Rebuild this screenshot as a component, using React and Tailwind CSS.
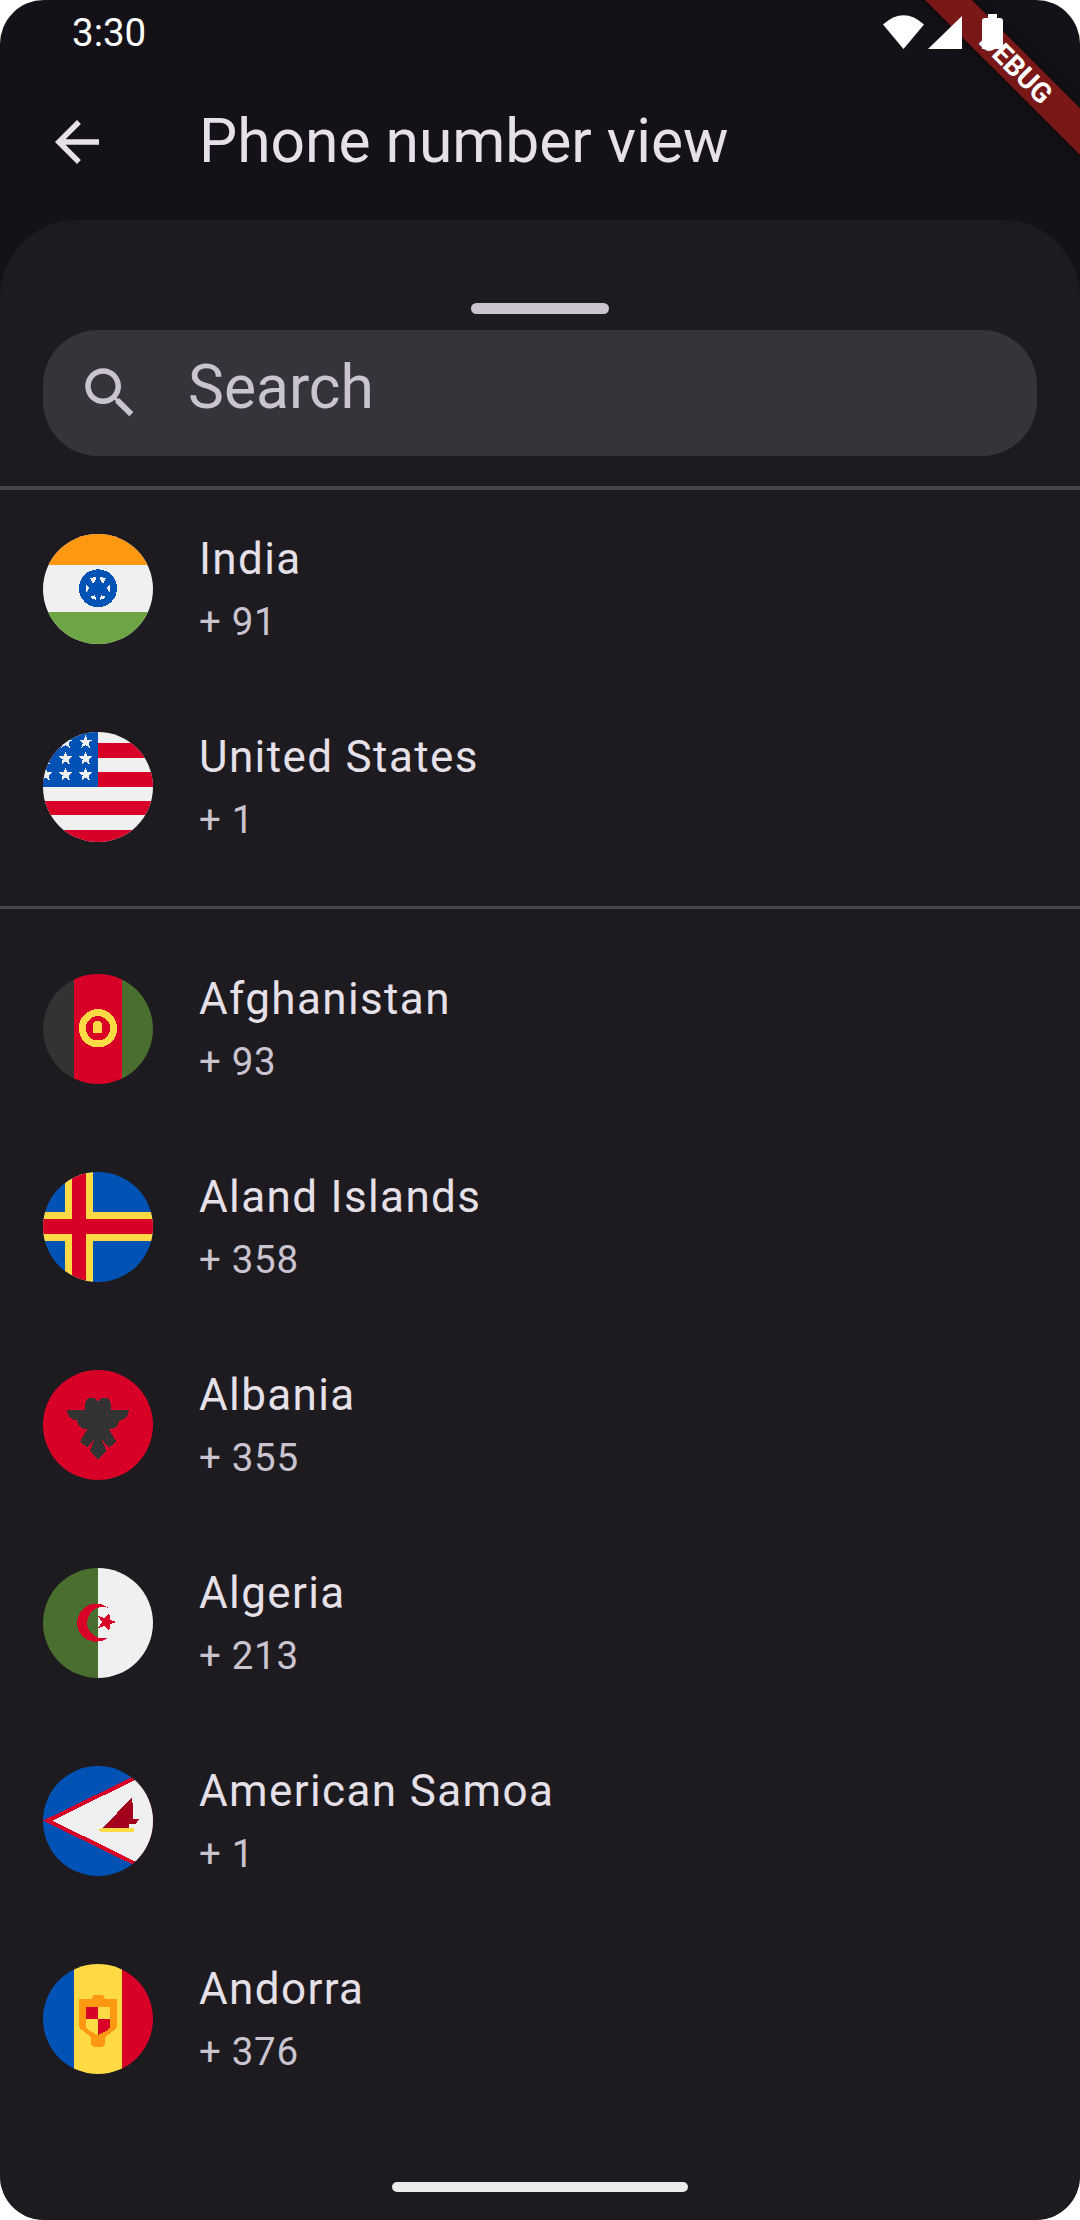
import React from 'react';

const BLUE = '#0052b4';
const RED = '#d80027';
const YELLOW = '#ffda44';
const WHITE = '#f0f0f0';
const GREEN = '#496e2d';
const DARK = '#333333';
const ORANGE = '#ff9811';

// five pointed star, rot in degrees
const starPoints = (cx, cy, r, rot = -90, inner = 0.42) => {
  const pts = [];
  for (let i = 0; i < 10; i++) {
    const a = ((rot + i * 36) * Math.PI) / 180;
    const rad = i % 2 === 0 ? r : r * inner;
    pts.push(`${(cx + rad * Math.cos(a)).toFixed(1)},${(cy + rad * Math.sin(a)).toFixed(1)}`);
  }
  return pts.join(' ');
};

function Flag({ box, children }) {
  return (
    <svg viewBox={box} shapeRendering="crispEdges" className="w-[110px] h-[110px] shrink-0 rounded-full">
      {children}
    </svg>
  );
}

const India = () => (
  <Flag box="-165 -163 330 330">
    <rect x="-165" y="-163" width="330" height="330" fill={WHITE} />
    <rect x="-165" y="-163" width="330" height="93" fill={ORANGE} />
    <rect x="-165" y="70" width="330" height="97" fill="#6da544" />
    <circle r="57" fill={BLUE} />
    <g fill={WHITE}>
      <polygon points="-24,-30 -6,-35 -8,-20 -16,-14" />
      <polygon points="24,-30 6,-35 8,-20 16,-14" />
      <polygon points="-36,-12 -26,0 -36,12" />
      <polygon points="36,-12 26,0 36,12" />
      <polygon points="-24,26 -9,20 -6,34 -18,32" />
      <polygon points="24,26 9,20 6,34 18,32" />
    </g>
  </Flag>
);

const Usa = () => {
  const stars = [[200, 30], [140, 30], [140, 80], [200, 80], [80, 80], [80, 128], [140, 128], [200, 128]];
  return (
    <Flag box="72 665 330 330">
      <rect x="72" y="665" width="330" height="330" fill={WHITE} />
      <rect x="72" y="698" width="330" height="45" fill={RED} />
      <rect x="72" y="786" width="330" height="44" fill={RED} />
      <rect x="72" y="872" width="330" height="43" fill={RED} />
      <rect x="72" y="960" width="330" height="35" fill={RED} />
      <rect x="72" y="665" width="165" height="165" fill={BLUE} />
      {stars.map(([x, y]) => (
        <polygon key={`${x}-${y}`} points={starPoints(x, 665 + y, 22)} fill={WHITE} />
      ))}
    </Flag>
  );
};

const Afghanistan = () => (
  <Flag box="42 42 330 330">
    <rect x="42" y="42" width="93" height="330" fill={DARK} />
    <rect x="135" y="42" width="144" height="330" fill={RED} />
    <rect x="279" y="42" width="93" height="330" fill={GREEN} />
    <circle cx="207" cy="205" r="47" fill="none" stroke={YELLOW} strokeWidth="21" />
    <path d="M192 219V198Q192 183 206 183Q220 183 220 198V219Z" fill={YELLOW} />
  </Flag>
);

const Aland = () => (
  <Flag box="42 35 330 330">
    <rect x="42" y="35" width="330" height="330" fill={BLUE} />
    <rect x="108" y="35" width="84" height="330" fill={YELLOW} />
    <rect x="42" y="156" width="330" height="87" fill={YELLOW} />
    <rect x="130" y="35" width="41" height="330" fill={RED} />
    <rect x="42" y="177" width="330" height="45" fill={RED} />
  </Flag>
);

const Albania = () => (
  <Flag box="42 30 330 330">
    <rect x="42" y="30" width="330" height="330" fill={RED} />
    <path
      d="M113 150H168Q166 113 187 113Q200 113 207 124Q214 113 227 113Q248 113 246 150H300Q298 178 270 182Q270 205 240 208L262 245L240 263L218 238L232 272L207 300L183 272L196 238L175 263L153 245L175 208Q145 205 145 182Q116 178 113 150Z"
      fill={DARK}
    />
  </Flag>
);

const Algeria = () => (
  <Flag box="42 53 330 330">
    <rect x="42" y="53" width="165" height="330" fill={GREEN} />
    <rect x="207" y="53" width="165" height="330" fill={WHITE} />
    <path d="M238 173A57 57 0 1 0 238 261A47 47 0 1 1 238 173Z" fill={RED} />
    <polygon points={starPoints(232, 215, 30, 0, 0.42)} fill={RED} />
  </Flag>
);

const Samoa = () => (
  <Flag box="42 47 330 330">
    <rect x="42" y="47" width="330" height="330" fill={BLUE} />
    <polygon points="42,211 310,80 372,80 372,342 310,342" fill={RED} />
    <polygon points="70,211 316,90 372,90 372,332 316,332" fill={WHITE} />
    <polygon points="222,232 310,140 312,205 330,205 322,220 300,220 300,234 285,234 285,232" fill="#a2001d" />
    <rect x="215" y="234" width="100" height="12" fill={YELLOW} />
    <rect x="210" y="237" width="6" height="6" fill={YELLOW} />
  </Flag>
);

const Andorra = () => (
  <Flag box="42 42 330 330">
    <rect x="42" y="42" width="93" height="330" fill={BLUE} />
    <rect x="135" y="42" width="144" height="330" fill={YELLOW} />
    <rect x="279" y="42" width="93" height="330" fill={RED} />
    <path
      d="M150 147H188Q190 135 198 135H217Q225 135 227 147H264V225Q264 235 255 241L228 262V280Q228 290 218 290H197Q187 290 187 280V262L160 241Q150 235 150 225Z"
      fill={ORANGE}
    />
    <path d="M171 171H243V226Q243 236 234 241L207 255L180 241Q171 236 171 226Z" fill={YELLOW} />
    <rect x="171" y="171" width="36" height="36" fill={RED} />
    <path d="M207 207H243V226Q243 236 234 241L207 255Z" fill={RED} />
  </Flag>
);

const PINNED = [
  { name: 'India', code: '+ 91', flag: <India /> },
  { name: 'United States', code: '+ 1', flag: <Usa /> },
];

const COUNTRIES = [
  { name: 'Afghanistan', code: '+ 93', flag: <Afghanistan /> },
  { name: 'Aland Islands', code: '+ 358', flag: <Aland /> },
  { name: 'Albania', code: '+ 355', flag: <Albania /> },
  { name: 'Algeria', code: '+ 213', flag: <Algeria /> },
  { name: 'American Samoa', code: '+ 1', flag: <Samoa /> },
  { name: 'Andorra', code: '+ 376', flag: <Andorra /> },
];

function CountryRow({ country }) {
  return (
    <div className="h-[198px] flex items-center pl-[43px]">
      {country.flag}
      <div className="ml-[46px] mb-[2px] flex flex-col gap-[7px]">
        <span className="text-[44px] leading-[60px] tracking-[1.375px] text-[#e6e0e9]">{country.name}</span>
        <span className="text-[38.5px] leading-[52px] tracking-[0.69px] text-[#cac4d0]">{country.code}</span>
      </div>
    </div>
  );
}

export default function App() {
  return (
    <div className="w-[1080px] h-[2220px] bg-white overflow-hidden" style={{ fontFamily: 'Roboto, sans-serif' }}>
      <div className="relative w-full h-full rounded-[44px] overflow-hidden bg-[#141218] flex flex-col">
        {/* status bar */}
        <div className="relative z-10 h-[64px] shrink-0 flex items-center justify-between pl-[72px] pr-[77px]">
          <span className="mt-[2px] text-[38.5px] leading-none text-white">3:30</span>
          <div className="flex items-end h-[35px] mb-[1px]">
            <svg width="41" height="34" viewBox="0 0 41 34">
              <path d="M0 9.5Q20.5 -9 41 9.5L20.5 34Z" fill="#fff" />
            </svg>
            <svg width="34" height="33" viewBox="0 0 34 33" className="ml-[4px]">
              <path d="M34 0V33H0Z" fill="#fff" />
            </svg>
            <svg width="21" height="35" viewBox="0 0 21 35" className="ml-[20px]">
              <path d="M6 0H15V4H18Q21 4 21 7V35H0V7Q0 4 3 4H6Z" fill="#fff" />
            </svg>
          </div>
        </div>

        {/* app bar */}
        <div className="h-[156px] shrink-0 flex items-center pl-[44px]">
          <svg width="66" height="66" viewBox="0 0 24 24" fill="#e6e0e9">
            <path d="M20 11H7.83l5.59-5.59L12 4l-8 8 8 8 1.41-1.41L7.83 13H20v-2z" />
          </svg>
          <span className="ml-[89px] text-[60.5px] leading-none text-[#e6e0e9]">Phone number view</span>
        </div>

        {/* sheet */}
        <div className="flex-1 bg-[#1d1b20] rounded-t-[77px] flex flex-col">
          <div className="mt-[83px] mx-auto w-[138px] h-[11px] rounded-full bg-[#cac4d0]" />
          <div className="mt-[16px] mx-[43px] h-[126px] rounded-[55px] bg-[#36343b] flex items-center pl-[34px]">
            <svg width="66" height="66" viewBox="0 0 24 24" fill="#cac4d0">
              <path d="M15.5 14h-.79l-.28-.27C15.41 12.59 16 11.11 16 9.5 16 5.91 13.09 3 9.5 3S3 5.91 3 9.5 5.91 16 9.5 16c1.61 0 3.09-.59 4.23-1.57l.27.28v.79l5 4.99L20.49 19l-4.99-5zm-6 0C7.01 14 5 11.99 5 9.5S7.01 5 9.5 5 14 7.01 14 9.5 11.99 14 9.5 14z" />
            </svg>
            <span className="ml-[45px] mb-[10px] text-[60.5px] leading-none text-[#cac4d0]">Search</span>
          </div>
          <div className="mt-[30px] h-[4px] bg-[#49454f]" />
          {PINNED.map((c) => (
            <CountryRow key={c.name} country={c} />
          ))}
          <div className="mt-[20px] mb-[21px] h-[3px] bg-[#49454f]" />
          {COUNTRIES.map((c) => (
            <CountryRow key={c.name} country={c} />
          ))}
          <div className="mt-auto mb-[28px] mx-auto w-[296px] h-[10px] rounded-full bg-[#ebebeb]" />
        </div>

        {/* debug banner */}
        <div className="absolute left-[863px] top-[48px] w-[300px] h-[33px] rotate-45 bg-[#7a1717] flex items-center justify-center pl-[8px] text-[28px] font-bold leading-none text-white shadow-[0_0_16px_rgba(0,0,0,0.5)]">
          DEBUG
        </div>
      </div>
    </div>
  );
}
